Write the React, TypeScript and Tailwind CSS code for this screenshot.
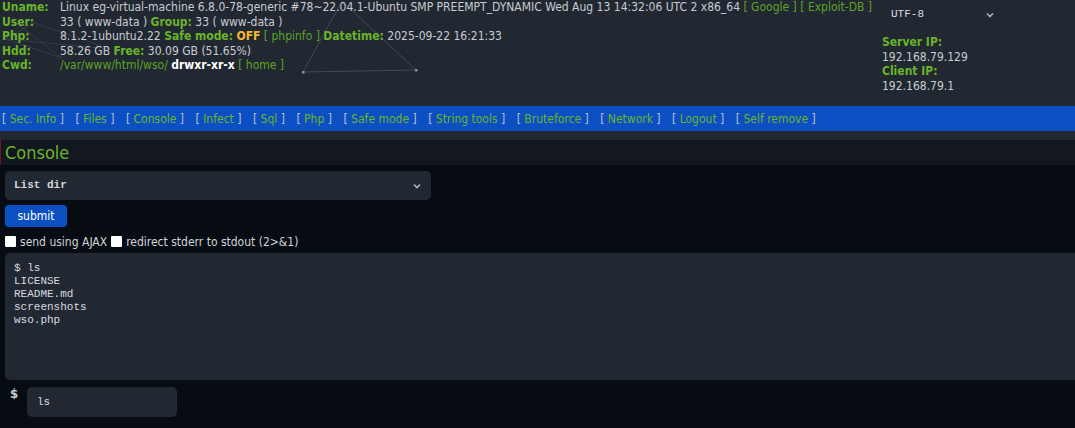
import React from 'react';

const sans = { fontFamily: '"DejaVu Sans Condensed", "DejaVu Sans", sans-serif' };
const mono = { fontFamily: '"Liberation Mono", monospace' };

const navItems = [
  'Sec. Info',
  'Files',
  'Console',
  'Infect',
  'Sql',
  'Php',
  'Safe mode',
  'String tools',
  'Bruteforce',
  'Network',
  'Logout',
  'Self remove',
];

const Label: React.FC<{ children: React.ReactNode }> = ({ children }) => (
  <span className="font-bold text-[#6ab42a]">{children}</span>
);

const Lnk: React.FC<{ children: React.ReactNode }> = ({ children }) => (
  <span className="text-[#5ca423]">[ {children} ]</span>
);

// background particle lines drawn over the header
const Particles = () => (
  <svg className="absolute inset-0 pointer-events-none" width="1075" height="106">
    <g stroke="#4a5260" strokeWidth="0.8" fill="none">
      <line x1="303" y1="72" x2="342" y2="1" />
      <line x1="342" y1="1" x2="416" y2="70" />
      <line x1="303" y1="72" x2="416" y2="70" />
    </g>
    <g stroke="#3c4452" strokeWidth="0.7" fill="none">
      <line x1="5" y1="39" x2="34" y2="23" />
      <line x1="5" y1="39" x2="110" y2="49" />
      <line x1="5" y1="39" x2="62" y2="58" />
      <line x1="20" y1="26" x2="62" y2="58" />
      <line x1="34" y1="23" x2="110" y2="49" />
      <line x1="20" y1="26" x2="5" y2="39" />
    </g>
    <g fill="#8a919c">
      <rect x="302" y="71" width="2.5" height="2.5" />
      <rect x="415" y="69" width="2.5" height="2.5" />
    </g>
  </svg>
);

export default function App() {
  return (
    <div className="w-[1075px] h-[428px] overflow-hidden bg-[#070b12] text-[#c8ccd2] text-[12px]" style={sans}>
      {/* header */}
      <div className="relative h-[106px] bg-[#222831] flex">
        <Particles />
        <table className="relative flex-1 self-start border-collapse leading-[14.5px] whitespace-nowrap">
          <tbody>
            <tr>
              <td className="w-[58px] pl-[2px]"><Label>Uname:</Label></td>
              <td className="pl-[2px]">
                Linux eg-virtual-machine 6.8.0-78-generic #78~22.04.1-Ubuntu SMP PREEMPT_DYNAMIC Wed Aug 13 14:32:06 UTC 2 x86_64{' '}
                <Lnk>Google</Lnk> <Lnk>Exploit-DB</Lnk>
              </td>
            </tr>
            <tr>
              <td className="pl-[2px]"><Label>User:</Label></td>
              <td className="pl-[2px]">
                33 ( www-data ) <Label>Group:</Label> 33 ( www-data )
              </td>
            </tr>
            <tr>
              <td className="pl-[2px]"><Label>Php:</Label></td>
              <td className="pl-[2px]">
                8.1.2-1ubuntu2.22 <Label>Safe mode:</Label>{' '}
                <span className="font-bold text-[#f3b82c]">OFF</span> <Lnk>phpinfo</Lnk>{' '}
                <Label>Datetime:</Label> 2025-09-22 16:21:33
              </td>
            </tr>
            <tr>
              <td className="pl-[2px]"><Label>Hdd:</Label></td>
              <td className="pl-[2px]">
                58.26 GB <Label>Free:</Label> 30.09 GB (51.65%)
              </td>
            </tr>
            <tr>
              <td className="pl-[2px]"><Label>Cwd:</Label></td>
              <td className="pl-[2px]">
                <span className="text-[#5ca423]">/var/www/html/wso/</span>{' '}
                <span className="font-bold text-white">drwxr-xr-x</span> <Lnk>home</Lnk>
              </td>
            </tr>
          </tbody>
        </table>
        <div className="relative w-[193px] shrink-0 leading-[14.5px]">
          <div
            className="mt-[4px] ml-[7px] h-[20px] w-[108px] flex items-center justify-between pl-[2px] pr-[3px] text-[11px] text-[#d8dbe0]"
            style={mono}
          >
            <span>UTF-8</span>
            <svg width="8" height="6" viewBox="0 0 8 6" className="mt-[1px]">
              <path d="M1 1.5 L4 4.5 L7 1.5" stroke="#aeb3bb" strokeWidth="1.6" fill="none" />
            </svg>
          </div>
          <div className="mt-[11px]">
            <div><Label>Server IP:</Label></div>
            <div>192.168.79.129</div>
            <div><Label>Client IP:</Label></div>
            <div>192.168.79.1</div>
          </div>
        </div>
      </div>

      {/* nav */}
      <div className="h-[25px] bg-[#0c4fc3] flex items-center pl-[2px] gap-[11.5px] text-[#b9c1cf]">
        {navItems.map((n) => (
          <span key={n}>
            [ <span className="text-[#6ab42a]">{n}</span> ]
          </span>
        ))}
      </div>

      <div className="h-[9px] bg-[#222831]" />

      {/* console */}
      <div className="h-[25px] bg-[#131820] border-l border-[#6b1a1a] flex items-center pl-[4px]">
        <span className="text-[18px] text-[#6ab42a]">Console</span>
      </div>

      <div className="pl-[5px] pt-[6px]">
        <div
          className="w-[426px] h-[29px] rounded-[5px] bg-[#222831] flex items-center justify-between pl-[9px] pr-[10px] text-[11px] font-bold text-[#d4d7dc]"
          style={mono}
        >
          <span>List dir</span>
          <svg width="8" height="6" viewBox="0 0 8 6">
            <path d="M1 1.5 L4 4.5 L7 1.5" stroke="#aeb3bb" strokeWidth="1.6" fill="none" />
          </svg>
        </div>
        <button className="mt-[5px] w-[62px] h-[22px] rounded-[4px] bg-[#0c4fc3] text-white text-[12px] flex items-center justify-center">
          submit
        </button>
        <div className="mt-[7px] h-[15px] flex items-center text-[12px] text-[#d0d3d8]">
          <span className="inline-block w-[11px] h-[11px] bg-white rounded-[1px] mr-[4px]" />
          <span>send using AJAX</span>
          <span className="inline-block w-[11px] h-[11px] bg-white rounded-[1px] ml-[4px] mr-[4px]" />
          <span>redirect stderr to stdout (2&gt;&amp;1)</span>
        </div>
        <div
          className="mt-[4px] h-[127px] rounded-l-[5px] bg-[#222831] pl-[9px] pt-[9px] text-[11px] leading-[13px] text-[#d8dbe0] whitespace-pre"
          style={mono}
        >
          {'$ ls\nLICENSE\nREADME.md\nscreenshots\nwso.php'}
        </div>
        <div className="mt-[7px] flex items-start">
          <span className="w-[22px] pl-[5px] font-bold text-[13px] leading-[13px] text-[#c8ccd2]">$</span>
          <div
            className="w-[150px] h-[30px] rounded-[5px] bg-[#222831] flex items-center pl-[10px] text-[11px] text-[#d8dbe0]"
            style={mono}
          >
            ls
          </div>
        </div>
      </div>
    </div>
  );
}
